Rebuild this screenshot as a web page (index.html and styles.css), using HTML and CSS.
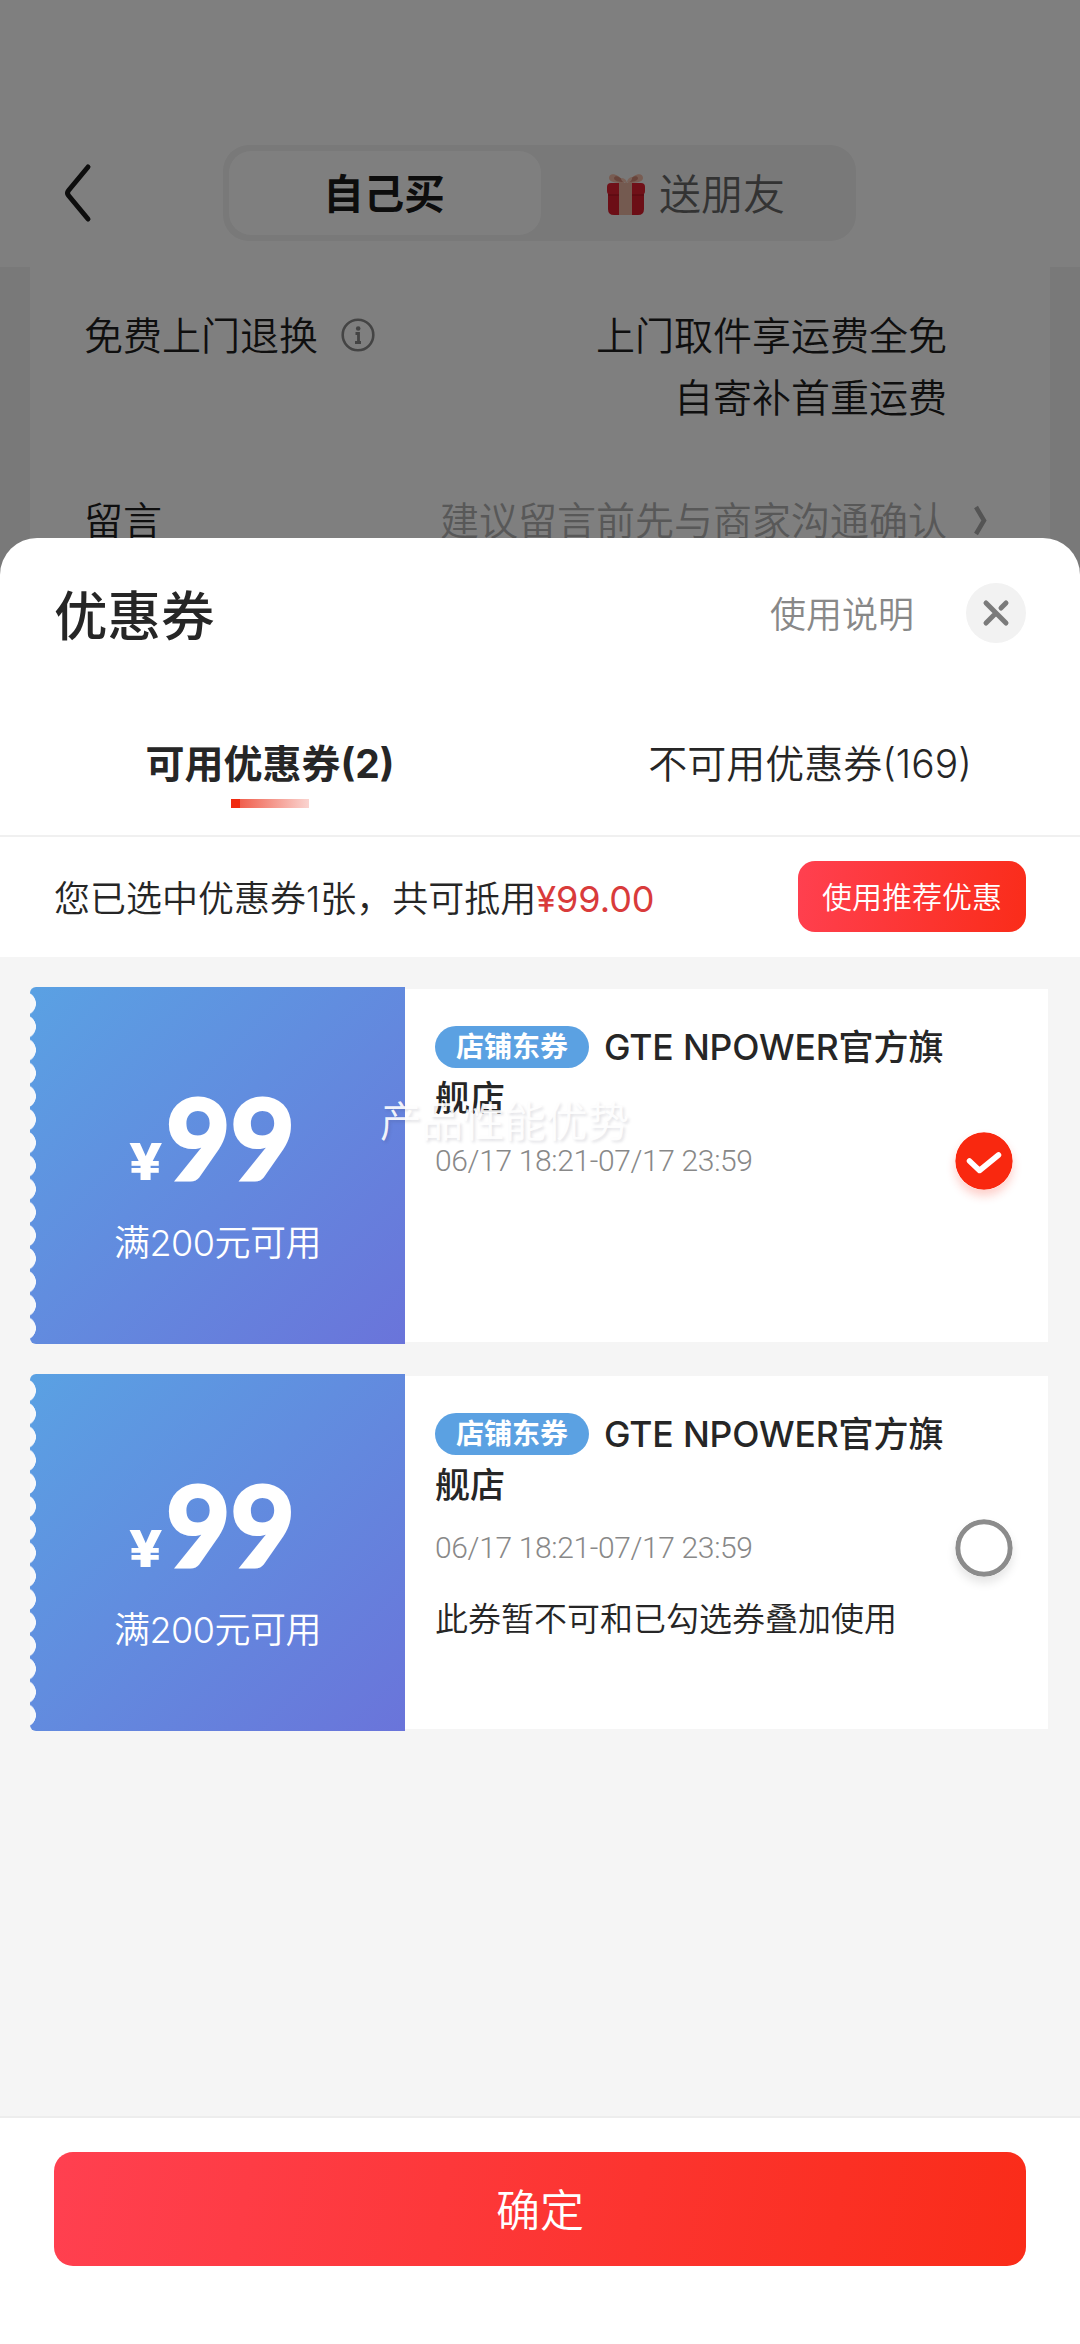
FILE: index.html
```html
<!DOCTYPE html>
<html lang="zh-CN">
<head>
<meta charset="utf-8">
<title>优惠券</title>
<link rel="stylesheet" href="styles.css">
</head>
<body>
<div class="screen">
  <div class="checkout">
    <header class="topbar">
      <svg class="back" viewBox="0 0 30 62" width="30" height="62"><path d="M25 5 5.500 28.500Q3.500 31 5.500 33.500L25 57" fill="none" stroke="#1a1a1a" stroke-width="5" stroke-linecap="round"/></svg>
      <div class="segment">
        <div class="segment-item active"><span>自己买</span></div>
        <div class="segment-item">
          <svg class="gift" viewBox="0 0 40 46" width="40" height="46">
            <path d="M18 12C12 3 3 2 3 8c0 4 6 5 15 5zM22 12c6-9 15-10 15-4 0 4-6 5-15 5z" fill="#f0b8a4"/>
            <path d="M18 12C14 6 9 5 8 8c0 3 5 4 10 4zM22 12c4-6 9-7 10-4 0 3-5 4-10 4z" fill="#d08876"/>
            <path d="M2 23h36v16q0 6-6 6H8q-6 0-6-6z" fill="#d81c2c"/>
            <rect x="1" y="13" width="38" height="12" rx="4" fill="#e02030"/>
            <path d="M2 25h36" stroke="#a8101c" stroke-width="1"/>
            <path d="M13 13h13v32H13z" fill="#e8b4a0"/>
            <path d="M20 13q-5-1-5-5 5 0 6 5 0-5 5-6 1 5-6 6z" fill="#f4c4b0"/>
          </svg>
          <span>送朋友</span>
        </div>
      </div>
    </header>
    <div class="order-card">
      <div class="order-row">
        <div class="order-label">免费上门退换
          <svg class="info" viewBox="0 0 34 34" width="34" height="34"><circle cx="17" cy="17" r="15.300" fill="none" stroke="#888" stroke-width="2.600"/><circle cx="17.200" cy="10.500" r="2.300" fill="#888"/><path d="M14.500 15.500h3v9M14 24.500h6" fill="none" stroke="#888" stroke-width="2.800"/></svg>
        </div>
        <div class="order-value">上门取件享运费全免<br>自寄补首重运费</div>
      </div>
      <div class="order-row message">
        <div class="order-label">留言</div>
        <div class="order-value hint">建议留言前先与商家沟通确认
          <svg class="more" viewBox="0 0 16 32" width="16" height="32"><path d="M4 2l8 13.500L4 29" fill="none" stroke="#a8a8a8" stroke-width="4.500"/></svg>
        </div>
      </div>
    </div>
  </div>
  <div class="mask"></div>

  <section class="sheet">
    <div class="sheet-head">
      <h1 class="sheet-title">优惠券</h1>
      <span class="help">使用说明</span>
      <span class="close"><svg viewBox="0 0 60 60" width="60" height="60"><path d="M20 20l20 20M20 40L30 30M35 25L40 20" fill="none" stroke="#7b7b7b" stroke-width="5" stroke-linecap="round"/></svg></span>
    </div>
    <nav class="tabs">
      <div class="tab active">可用优惠券(2)</div>
      <div class="tab">不可用优惠券(169)</div>
    </nav>
    <div class="summary">
      <div>您已选中优惠券1张，共可抵用<span class="amount">¥99.00</span></div>
      <div class="recommend">使用推荐优惠</div>
    </div>
    <div class="list">
      <article class="coupon">
        <div class="face">
          <div class="price"><span class="yen">¥</span>99</div>
          <div class="limit">满200元可用</div>
        </div>
        <div class="detail">
          <div class="info-col">
            <div class="name"><span class="tag">店铺东券</span><span class="latin">GTE NPOWER</span>官方旗舰店</div>
            <div class="date">06/17 18:21-07/17 23:59</div>
          </div>
          <svg class="choice checked" viewBox="0 0 58 58" width="58" height="58"><circle cx="29" cy="29" r="28.700" fill="#f9280f"/><path d="M14.500 29l10 9.500L43.500 23" fill="none" stroke="#fff" stroke-width="5.500" stroke-linejoin="round" stroke-linecap="round"/></svg>
        </div>
      </article>
      <article class="coupon">
        <div class="face">
          <div class="price"><span class="yen">¥</span>99</div>
          <div class="limit">满200元可用</div>
        </div>
        <div class="detail">
          <div class="info-col">
            <div class="name"><span class="tag">店铺东券</span><span class="latin">GTE NPOWER</span>官方旗舰店</div>
            <div class="date">06/17 18:21-07/17 23:59</div>
            <div class="note">此券暂不可和已勾选券叠加使用</div>
          </div>
          <svg class="choice" viewBox="0 0 58 58" width="58" height="58"><circle cx="29" cy="29" r="26.200" fill="#fff" stroke="#8c8c8c" stroke-width="5"/></svg>
        </div>
      </article>
    </div>
    <footer class="footer"><div class="confirm">确定</div></footer>
    <div class="caption">产品性能优势</div>
  </section>
</div>
</body>
</html>
```
FILE: styles.css
```css
* { box-sizing: border-box; }
body { margin: 0; font-family: Inter, "Noto Sans CJK SC", sans-serif; font-weight: 350; color: #262626; }
svg { display: block; flex: none; }

.screen { position: relative; width: 1080px; height: 2344px; overflow: hidden; background: #f2f2f2; }

/* Checkout page behind the sheet */
.topbar { height: 267px; padding: 145px 0 0 63px; background: #fff; display: flex; align-items: flex-start; }
.back { margin-top: 17px; }
.segment { margin-left: 130px; width: 633px; height: 96px; padding: 6px; border-radius: 26px; background: #f2f2f2; display: flex; }
.segment-item { flex: 0 0 312px; display: flex; align-items: center; justify-content: center; gap: 13px; font-size: 42px; line-height: 84px; color: #666; }
.segment-item span { padding-top: 3px; }
.segment-item.active { border-radius: 22px; background: #fff; color: #1a1a1a; font-weight: 700; font-size: 40.5px; padding-right: 2px; }
.segment-item:not(.active) { padding-right: 3px; }
.order-card { margin: 0 30px; height: 300px; padding: 38px 103px 0 54px; background: #fff; font-size: 39px; line-height: 62px; color: #1f1f1f; }
.order-row { display: flex; justify-content: space-between; align-items: flex-start; }
.order-label { display: flex; align-items: center; gap: 23px; }
.info { margin-top: -3px; }
.order-value { text-align: right; }
.order-row.message { margin-top: 61px; }
.hint { display: flex; align-items: center; gap: 25px; margin-right: -41px; color: #b0b0b0; }
.mask { position: absolute; inset: 0; background: rgba(0, 0, 0, .5); }

/* Coupon sheet */
.sheet { position: absolute; left: 0; right: 0; top: 538px; bottom: 0; border-radius: 37px 37px 0 0; background: #fff; display: flex; flex-direction: column; overflow: hidden; }
.sheet-head { height: 150px; padding: 0 54px; display: flex; align-items: center; }
.sheet-title { margin: 7px auto 0 0; font-size: 53.500px; line-height: 80px; font-weight: 450; }
.help { margin: 3px 52px 0 0; font-size: 36px; line-height: 54px; color: #888; }
.close { width: 60px; height: 60px; border-radius: 50%; background: #f2f2f2; }
.tabs { height: 149px; border-bottom: 2px solid #f0f0f0; display: flex; }
.tab { position: relative; flex: 1; text-align: center; font-size: 39px; line-height: 151px; }
.tab.active { font-weight: 700; }
.tab.active::after { content: ""; position: absolute; left: 231px; top: 111px; width: 78px; height: 9px; background: linear-gradient(90deg, #f02a10 9px, #f0604e 9px, #fad4d0); }
.summary { height: 120px; padding: 0 54px 2px; display: flex; align-items: center; justify-content: space-between; font-size: 36px; }
.amount { color: #d93b3b; font-weight: 400; }
.recommend { width: 228px; height: 71px; border-radius: 17px; background: linear-gradient(100deg, #ff4050, #fa2c19); color: #fff; font-size: 30px; line-height: 72px; text-align: center; }

.list { flex: 1; padding: 30px 32px 0 30px; background: #f5f5f5; display: flex; flex-direction: column; gap: 30px; }
.coupon { height: 357px; display: flex; align-items: center; }
.face { position: relative; flex: none; width: 375px; height: 357px; border-radius: 6px 0 0 6px; background: linear-gradient(135deg, #5aa1e3, #6a74da); color: #fff; display: flex; flex-direction: column; align-items: center; padding-top: 96px; }
.face::before { content: ""; position: absolute; left: 0; top: 4.5px; width: 8px; height: 348px; background: radial-gradient(circle 12px at -6px 50%, #f7f8fa 11.600px, transparent 12.200px) 0 0 / 8px 23.200px repeat-y; }
.price { display: flex; align-items: baseline; gap: 5px; margin-right: 9px; font-family: Lato, sans-serif; font-weight: 900; font-size: 112px; line-height: 108px; letter-spacing: -.5px; -webkit-text-stroke: 2px #fff; }
.yen { font-family: Inter, sans-serif; font-weight: 800; font-size: 51px; letter-spacing: 0; transform: scaleX(1.15); -webkit-text-stroke: 0; }
.limit { font-size: 36px; line-height: 54px; letter-spacing: -.5px; }
.detail { flex: 1; min-width: 0; height: 353px; background: #fff; padding: 0 35px 0 30px; display: flex; align-items: center; justify-content: space-between; }
.info-col { align-self: stretch; padding-top: 33px; width: 515px; }
.name { font-size: 35px; line-height: 51px; font-weight: 450; }
.tag { display: inline-block; position: relative; top: -3px; width: 154px; height: 42px; margin-right: 15px; border-radius: 21px; background: #5ba1e2; color: #fff; font-size: 28px; font-weight: 700; line-height: 42px; text-align: center; vertical-align: middle; }
.latin { font-size: 35.5px; line-height: 1; letter-spacing: -.15px; }
.date { margin-top: 16px; font-family: Roboto, sans-serif; font-weight: 300; font-size: 30px; line-height: 42px; letter-spacing: -.36px; color: #888; }
.note { margin-top: 25px; font-size: 33px; line-height: 50px; }
.choice { border-radius: 50%; margin-top: -10px; box-shadow: 0 6px 10px rgba(0, 0, 0, .1); }
.choice.checked { box-shadow: 0 6px 10px rgba(250, 40, 20, .22); }

.footer { height: 228px; padding: 34px 54px 0; border-top: 2px solid #ededed; background: #fff; }
.confirm { height: 114px; border-radius: 19px; background: linear-gradient(100deg, #ff4050, #fa2c19); color: #fff; font-size: 44px; line-height: 118px; text-align: center; }

.caption { position: absolute; left: 380px; top: 554px; font-size: 41.500px; line-height: 60px; color: rgba(255, 255, 255, .92); text-shadow: 2px 2px 3px rgba(60, 60, 90, .15); white-space: nowrap; }
```
